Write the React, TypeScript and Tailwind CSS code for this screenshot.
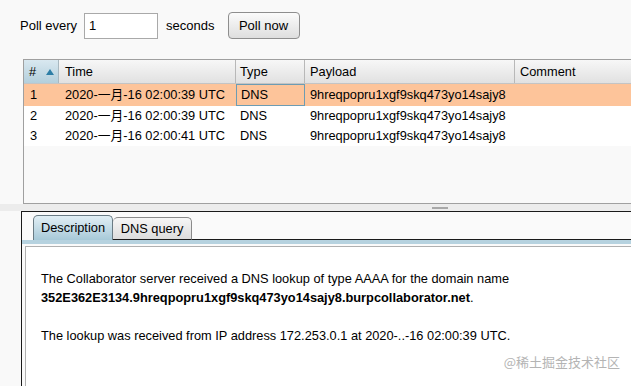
import React from "react";

type Row = {
  id: number;
  time: string;
  type: string;
  payload: string;
};

const rows: Row[] = [
  { id: 1, time: "2020-一月-16 02:00:39 UTC", type: "DNS", payload: "9hreqpopru1xgf9skq473yo14sajy8" },
  { id: 2, time: "2020-一月-16 02:00:39 UTC", type: "DNS", payload: "9hreqpopru1xgf9skq473yo14sajy8" },
  { id: 3, time: "2020-一月-16 02:00:41 UTC", type: "DNS", payload: "9hreqpopru1xgf9skq473yo14sajy8" },
];

const cols = "grid grid-cols-[35px_177px_69px_210px_1fr]";

export default function App() {
  return (
    <div
      className="w-[631px] h-[386px] overflow-hidden bg-[#f9f9f9] text-[12.8px] text-black flex flex-col"
      style={{ fontFamily: '"Liberation Sans", Arial, "Noto Sans CJK SC", sans-serif' }}
    >
      {/* poll bar */}
      <div className="flex items-center h-[27px] mt-[12px] pl-[20px] text-[13px]">
        <span>Poll every</span>
        <div className="ml-[7px] w-[74px] h-[26px] border border-[#a9a9a9] bg-white flex items-center pl-[4px]">1</div>
        <span className="ml-[8px]">seconds</span>
        <button className="ml-[13px] w-[72px] h-[27px] rounded-[4px] border border-[#8e8e8e] bg-gradient-to-b from-[#fbfbfb] to-[#dedede] text-[13px]">
          Poll now
        </button>
      </div>

      {/* table */}
      <div className="ml-[23px] mt-[20px] h-[145px] border-l border-t border-b border-[#a0a0a0] bg-[#f9f9f9] flex flex-col">
        <div className={`${cols} h-[24px] border-b border-[#c4c4c4]`}>
          <div className="flex items-center justify-between pl-[5px] pr-[4px] bg-gradient-to-b from-[#d9e8f0] to-[#b3cfdc] border-r border-[#a8b8c0]">
            <span>#</span>
            <svg width="8" height="6" viewBox="0 0 8 6">
              <path d="M0 6 L4 0 L8 6 Z" fill="#2d7ea6" />
            </svg>
          </div>
          <div className="flex items-center px-[6px] bg-gradient-to-b from-[#f7f7f7] to-[#e1e1e1] border-r border-[#b8b8b8]">Time</div>
          <div className="flex items-center px-[4px] bg-gradient-to-b from-[#f7f7f7] to-[#e1e1e1] border-r border-[#b8b8b8]">Type</div>
          <div className="flex items-center px-[5px] bg-gradient-to-b from-[#f7f7f7] to-[#e1e1e1] border-r border-[#b8b8b8]">Payload</div>
          <div className="flex items-center px-[5px] bg-gradient-to-b from-[#f7f7f7] to-[#e1e1e1]">Comment</div>
        </div>
        {rows.map((r, i) => (
          <div key={r.id} className={`${cols} ${i === 0 ? "h-[22px] bg-[#fdc49a]" : "h-[20px] bg-white"}`}>
            <div className="flex items-center px-[6px]">{r.id}</div>
            <div className="flex items-center px-[6px]">{r.time}</div>
            <div className={`flex items-center px-[4px] ${i === 0 ? "border border-[#6d9cb3]" : ""}`}>{r.type}</div>
            <div className="flex items-center px-[5px]">{r.payload}</div>
            <div />
          </div>
        ))}
      </div>

      {/* splitter */}
      <div className="h-[7px] bg-[#ececec] flex items-center">
        <div className="ml-[432px] w-[16px] h-[2px] bg-[#a8a8a8]" />
      </div>

      {/* lower panel */}
      <div className="ml-[21px] flex-1 border-l border-t border-[#1a1a1a] bg-[#fafafa] flex flex-col">
        <div className="flex h-[25px] mt-[3px] pl-[11px]">
          <div className="w-[80px] h-full flex items-center justify-center rounded-t-[5px] border border-b-0 border-[#6a7b84] bg-gradient-to-b from-[#e2eff5] to-[#a7c9d8]">
            Description
          </div>
          <div className="w-[79px] h-[23px] mt-[2px] flex items-center justify-center rounded-t-[5px] border border-l-0 border-[#8a8a8a] border-b-[#1a1a1a] bg-gradient-to-b from-[#f6f6f6] to-[#dcdcdc]">
            DNS query
          </div>
          <div className="flex-1 border-b border-[#1a1a1a]" />
        </div>
        <div className="h-[4px] bg-[#b6d2df]" />
        <div className="h-[2px] bg-[#fafafa]" />
        <div className="ml-[3px] flex-1 border-l border-t border-[#b0b0b0] bg-white pl-[15px] pt-[22px] leading-[19px]">
          <p>The Collaborator server received a DNS lookup of type AAAA for the domain name</p>
          <p className="font-bold">352E362E3134.9hreqpopru1xgf9skq473yo14sajy8.burpcollaborator.net<span className="font-normal">.</span></p>
          <p className="mt-[19px]">The lookup was received from IP address 172.253.0.1 at 2020-..-16 02:00:39 UTC.</p>
          <div className="flex justify-end pr-[11px] mt-[7px] text-[13px] text-[#b4b4b4]" style={{ fontFamily: '"Noto Sans CJK SC", sans-serif' }}>
            @稀土掘金技术社区
          </div>
        </div>
      </div>
    </div>
  );
}
